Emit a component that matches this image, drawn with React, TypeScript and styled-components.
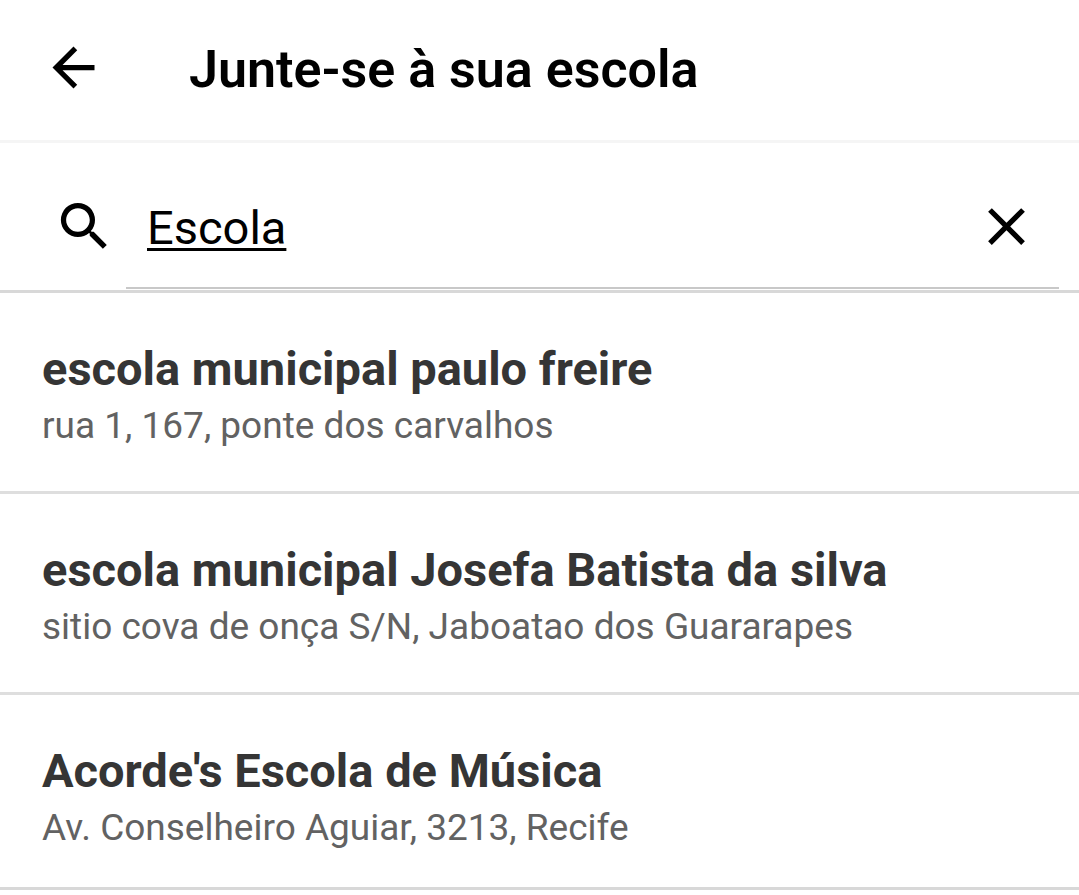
import React, { useState } from "react";
import styled, { createGlobalStyle } from "styled-components";

const GlobalStyle = createGlobalStyle`
  * { box-sizing: border-box; }
  body { margin: 0; background: #fff; font-family: Roboto, sans-serif; color: #000; }
`;

const Header = styled.header`
  display: flex;
  align-items: center;
  gap: 84px;
  height: 143px;
  padding: 0 42px 6px;
  border-bottom: 3px solid #f5f5f5;
`;

const IconButton = styled.button`
  display: flex;
  flex: none;
  padding: 0;
  border: 0;
  background: none;
  color: inherit;
  cursor: pointer;
`;

const Icon = styled.svg`
  display: block;
  flex: none;
  width: 63px;
  height: 63px;
  fill: currentColor;
`;

const Title = styled.h1`
  margin: 0;
  padding-top: 6px;
  font-size: 52px;
  line-height: 64px;
  font-weight: 600;
`;

const SearchBar = styled.form`
  display: flex;
  align-items: flex-end;
  height: 150px;
  padding: 0 20px 1px 53px;
  border-bottom: 3px solid #d8d8d8;
`;

const SearchLabel = styled.label`
  display: flex;
  width: 73px;
  padding-bottom: 31px;
`;

const Field = styled.div`
  display: flex;
  flex: 1;
  align-items: center;
  height: 124px;
  padding: 0 21px;
  border-bottom: 2px solid #c8c8c8;
`;

const SearchInput = styled.input`
  flex: 1;
  min-width: 0;
  padding: 4px 0 0;
  border: 0;
  outline: 0;
  background: none;
  color: #000;
  font: 400 47px/64px Roboto, sans-serif;
  text-decoration: underline;
  text-decoration-thickness: 3px;
  text-underline-offset: 4px;
  text-decoration-skip-ink: none;
`;

const Results = styled.ul`
  margin: 0;
  padding: 0;
  list-style: none;
`;

const Result = styled.li`
  height: 201px;
  padding: 48px 42px 0;
  border-bottom: 3px solid #dedede;
  &:last-child { height: 195px; border-color: #d8d8d8; }
`;

const Name = styled.h2`
  margin: 0;
  color: #353535;
  font-size: 47px;
  line-height: 56px;
  font-weight: 700;
`;

const Address = styled.p`
  margin: 0;
  color: #626262;
  font-size: 37px;
  line-height: 58px;
`;

const schools = [
  { name: "escola municipal paulo freire", address: "rua 1, 167, ponte dos carvalhos" },
  { name: "escola municipal Josefa Batista da silva", address: "sitio cova de onça S/N, Jaboatao dos Guararapes" },
  { name: "Acorde's Escola de Música", address: "Av. Conselheiro Aguiar, 3213, Recife" },
];

export default function App() {
  const [query, setQuery] = useState("Escola");
  return (
    <>
      <GlobalStyle />
      <Header>
        <IconButton type="button" aria-label="Voltar">
          <Icon viewBox="0 0 24 24"><path d="M20 11H7.83l5.59-5.59L12 4l-8 8 8 8 1.41-1.41L7.83 13H20v-2z" /></Icon>
        </IconButton>
        <Title>Junte-se à sua escola</Title>
      </Header>
      <main>
        <SearchBar role="search" onSubmit={(e) => e.preventDefault()}>
          <SearchLabel htmlFor="school" aria-label="Buscar">
            <Icon viewBox="0 0 24 24"><path d="M15.5 14h-.79l-.28-.27A6.471 6.471 0 0 0 16 9.5 6.5 6.5 0 1 0 9.5 16c1.61 0 3.09-.59 4.23-1.57l.27.28v.79l5 4.99L20.49 19l-4.99-5zm-6 0C7.01 14 5 11.99 5 9.5S7.01 5 9.5 5 14 7.01 14 9.5 11.99 14 9.5 14z" /></Icon>
          </SearchLabel>
          <Field>
            <SearchInput id="school" type="text" aria-label="Buscar escola" spellCheck={false} value={query} onChange={(e) => setQuery(e.target.value)} />
            <IconButton type="button" aria-label="Limpar" onClick={() => setQuery("")}>
              <Icon viewBox="0 0 24 24"><path d="M19 6.41 17.59 5 12 10.59 6.41 5 5 6.41 10.59 12 5 17.59 6.41 19 12 13.41 17.59 19 19 17.59 13.41 12z" /></Icon>
            </IconButton>
          </Field>
        </SearchBar>
        <Results>
          {schools.map((s) => (
            <Result key={s.name}>
              <Name>{s.name}</Name>
              <Address>{s.address}</Address>
            </Result>
          ))}
        </Results>
      </main>
    </>
  );
}
